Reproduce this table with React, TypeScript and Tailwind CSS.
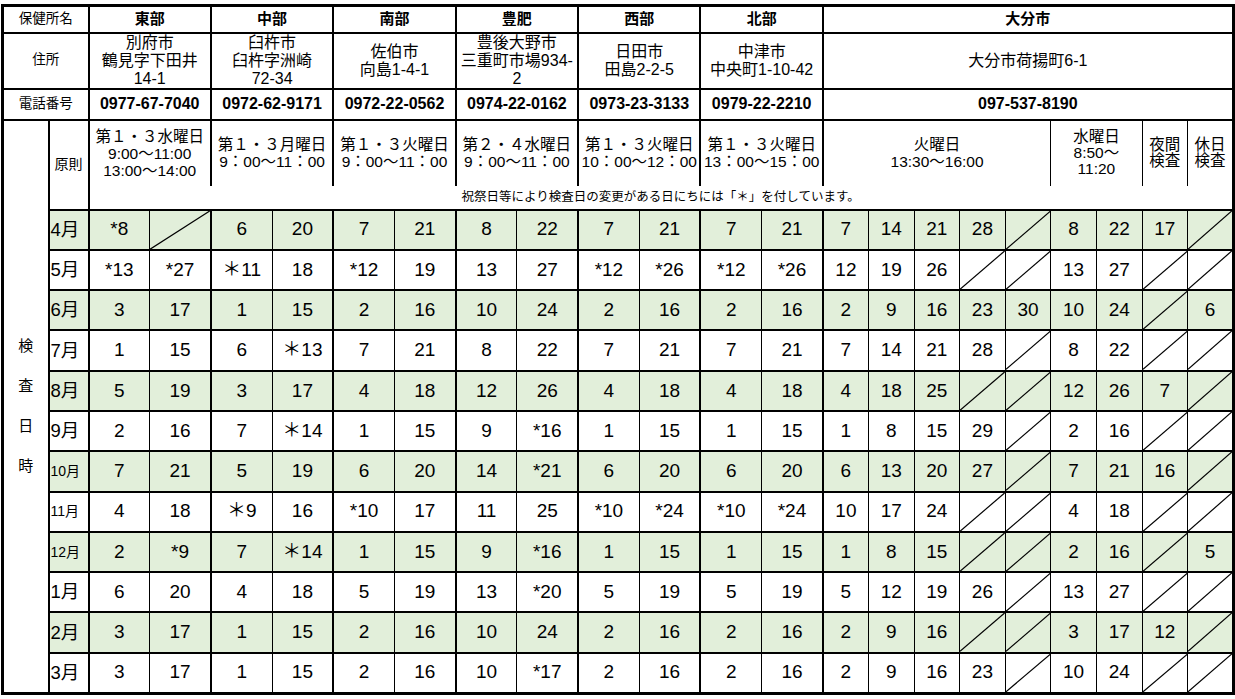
import React from "react";

type Cell = string | null;

const offices = ["東部", "中部", "南部", "豊肥", "西部", "北部"];

const addresses = [
  ["別府市", "鶴見字下田井", "14-1"],
  ["臼杵市", "臼杵字洲崎", "72-34"],
  ["佐伯市", "向島1-4-1"],
  ["豊後大野市", "三重町市場934-", "2"],
  ["日田市", "田島2-2-5"],
  ["中津市", "中央町1-10-42"],
];

const phones = [
  "0977-67-7040",
  "0972-62-9171",
  "0972-22-0562",
  "0974-22-0162",
  "0973-23-3133",
  "0979-22-2210",
];

const rules = [
  ["第１・３水曜日", "9:00～11:00", "13:00～14:00"],
  ["第１・３月曜日", "9：00～11：00"],
  ["第１・３火曜日", "9：00～11：00"],
  ["第２・４水曜日", "9：00～11：00"],
  ["第１・３火曜日", "10：00～12：00"],
  ["第１・３火曜日", "13：00～15：00"],
];

// 各月: 6保健所×2 + 大分市(火×5, 水×2, 夜間, 休日)
const months: { label: string; small?: boolean; cells: Cell[] }[] = [
  { label: "4月", cells: ["*8", null, "6", "20", "7", "21", "8", "22", "7", "21", "7", "21", "7", "14", "21", "28", null, "8", "22", "17", null] },
  { label: "5月", cells: ["*13", "*27", "＊11", "18", "*12", "19", "13", "27", "*12", "*26", "*12", "*26", "12", "19", "26", null, null, "13", "27", null, null] },
  { label: "6月", cells: ["3", "17", "1", "15", "2", "16", "10", "24", "2", "16", "2", "16", "2", "9", "16", "23", "30", "10", "24", null, "6"] },
  { label: "7月", cells: ["1", "15", "6", "＊13", "7", "21", "8", "22", "7", "21", "7", "21", "7", "14", "21", "28", null, "8", "22", null, null] },
  { label: "8月", cells: ["5", "19", "3", "17", "4", "18", "12", "26", "4", "18", "4", "18", "4", "18", "25", null, null, "12", "26", "7", null] },
  { label: "9月", cells: ["2", "16", "7", "＊14", "1", "15", "9", "*16", "1", "15", "1", "15", "1", "8", "15", "29", null, "2", "16", null, null] },
  { label: "10月", small: true, cells: ["7", "21", "5", "19", "6", "20", "14", "*21", "6", "20", "6", "20", "6", "13", "20", "27", null, "7", "21", "16", null] },
  { label: "11月", small: true, cells: ["4", "18", "＊9", "16", "*10", "17", "11", "25", "*10", "*24", "*10", "*24", "10", "17", "24", null, null, "4", "18", null, null] },
  { label: "12月", small: true, cells: ["2", "*9", "7", "＊14", "1", "15", "9", "*16", "1", "15", "1", "15", "1", "8", "15", null, null, "2", "16", null, "5"] },
  { label: "1月", cells: ["6", "20", "4", "18", "5", "19", "13", "*20", "5", "19", "5", "19", "5", "12", "19", "26", null, "13", "27", null, null] },
  { label: "2月", cells: ["3", "17", "1", "15", "2", "16", "10", "24", "2", "16", "2", "16", "2", "9", "16", null, null, "3", "17", "12", null] },
  { label: "3月", cells: ["3", "17", "1", "15", "2", "16", "10", "*17", "2", "16", "2", "16", "2", "9", "16", "23", null, "10", "24", null, null] },
];

function Slash() {
  return (
    <svg
      className="absolute inset-0 h-full w-full"
      viewBox="0 0 100 100"
      preserveAspectRatio="none"
    >
      <line
        x1="0"
        y1="100"
        x2="100"
        y2="0"
        stroke="black"
        strokeWidth="1.2"
        vectorEffect="non-scaling-stroke"
      />
    </svg>
  );
}

export default function App() {
  return (
    <div className="h-[699px] bg-white pl-[1px] pt-[4px] font-['Liberation_Sans','Noto_Sans_CJK_JP',sans-serif] text-black">
      <table className="w-[1233px] table-fixed border-collapse border-[3px] border-black">
        <colgroup>
          <col className="w-[46px]" />
          <col className="w-[40px]" />
          {Array.from({ length: 12 }).map((_, i) => (
            <col key={i} className="w-[61.2px]" />
          ))}
          {Array.from({ length: 9 }).map((_, i) => (
            <col key={`o${i}`} className="w-[45.6px]" />
          ))}
        </colgroup>
        <tbody>
          {/* 保健所名 */}
          <tr className="h-[27px]">
            <td colSpan={2} className="border-2 border-black text-center text-[13.5px]">
              保健所名
            </td>
            {offices.map((o) => (
              <td key={o} colSpan={2} className="border-2 border-black text-center text-[15px] font-bold">
                {o}
              </td>
            ))}
            <td colSpan={9} className="border-2 border-black text-center text-[15px] font-bold">
              大分市
            </td>
          </tr>

          {/* 住所 */}
          <tr className="h-[56px]">
            <td colSpan={2} className="border-2 border-black text-center text-[13.5px]">
              住所
            </td>
            {addresses.map((a, i) => (
              <td key={i} colSpan={2} className="border-2 border-black text-center text-[16px] leading-[18px] whitespace-nowrap">
                {a.map((line) => (
                  <div key={line}>{line}</div>
                ))}
              </td>
            ))}
            <td colSpan={9} className="border-2 border-black text-center text-[16px]">
              大分市荷揚町6-1
            </td>
          </tr>

          {/* 電話番号 */}
          <tr className="h-[31px]">
            <td colSpan={2} className="border-2 border-black text-center text-[13.5px]">
              電話番号
            </td>
            {phones.map((p) => (
              <td key={p} colSpan={2} className="border-2 border-black text-center text-[16px] font-bold">
                {p}
              </td>
            ))}
            <td colSpan={9} className="border-2 border-black text-center text-[16px] font-bold">
              097-537-8190
            </td>
          </tr>

          {/* 原則 */}
          <tr className="h-[66px]">
            <td rowSpan={16} className="border-2 border-black text-center text-[15px] leading-[40px]">
              <div>検</div>
              <div>査</div>
              <div>日</div>
              <div>時</div>
            </td>
            <td rowSpan={2} className="border-2 border-black text-center text-[14px]">
              原則
            </td>
            {rules.map((r, i) => (
              <td key={i} colSpan={2} className="border-x-2 border-t-2 border-b-0 border-black text-center text-[15.5px] leading-[17px] whitespace-nowrap">
                {r.map((line) => (
                  <div key={line}>{line}</div>
                ))}
              </td>
            ))}
            <td colSpan={5} className="border-l-2 border-r border-t-2 border-b-0 border-black text-center text-[15.5px] leading-[17px]">
              <div>火曜日</div>
              <div>13:30～16:00</div>
            </td>
            <td colSpan={2} className="border-x border-t-2 border-b-0 border-black text-center text-[15.5px] leading-[16px]">
              <div>水曜日</div>
              <div>8:50～</div>
              <div>11:20</div>
            </td>
            <td className="border-x border-t-2 border-b-0 border-black text-center text-[15.5px] leading-[16px]">
              <div>夜間</div>
              <div>検査</div>
            </td>
            <td className="border-x border-t-2 border-b-0 border-black text-center text-[15.5px] leading-[16px]">
              <div>休日</div>
              <div>検査</div>
            </td>
          </tr>

          {/* 注記 */}
          <tr className="h-[24px]">
            <td colSpan={21} className="border-t-0 border-b-2 border-l-2 border-black text-center text-[12.5px]">
              祝祭日等により検査日の変更がある日にちには「＊」を付しています。
            </td>
          </tr>

          {/* 各月 */}
          {months.map((m, mi) => {
            const green = mi % 2 === 0;
            return (
              <tr key={m.label} className={green ? "h-[40.3px] bg-[#e2efda]" : "h-[40.3px] bg-white"}>
                <td className={m.small ? "border-2 border-black pl-[1px] text-[14px]" : "border-2 border-black pl-[1px] text-[18.5px]"}>
                  {m.label}
                </td>
                {m.cells.map((c, ci) => {
                  const officeStart = (ci < 12 && ci % 2 === 0) || ci === 12;
                  return (
                    <td
                      key={ci}
                      className={
                        officeStart
                          ? "relative border border-y-2 border-l-2 border-black p-0 text-center text-[19px]"
                          : "relative border border-y-2 border-black p-0 text-center text-[19px]"
                      }
                    >
                      {c === null ? <Slash /> : c}
                    </td>
                  );
                })}
              </tr>
            );
          })}
        </tbody>
      </table>
    </div>
  );
}
